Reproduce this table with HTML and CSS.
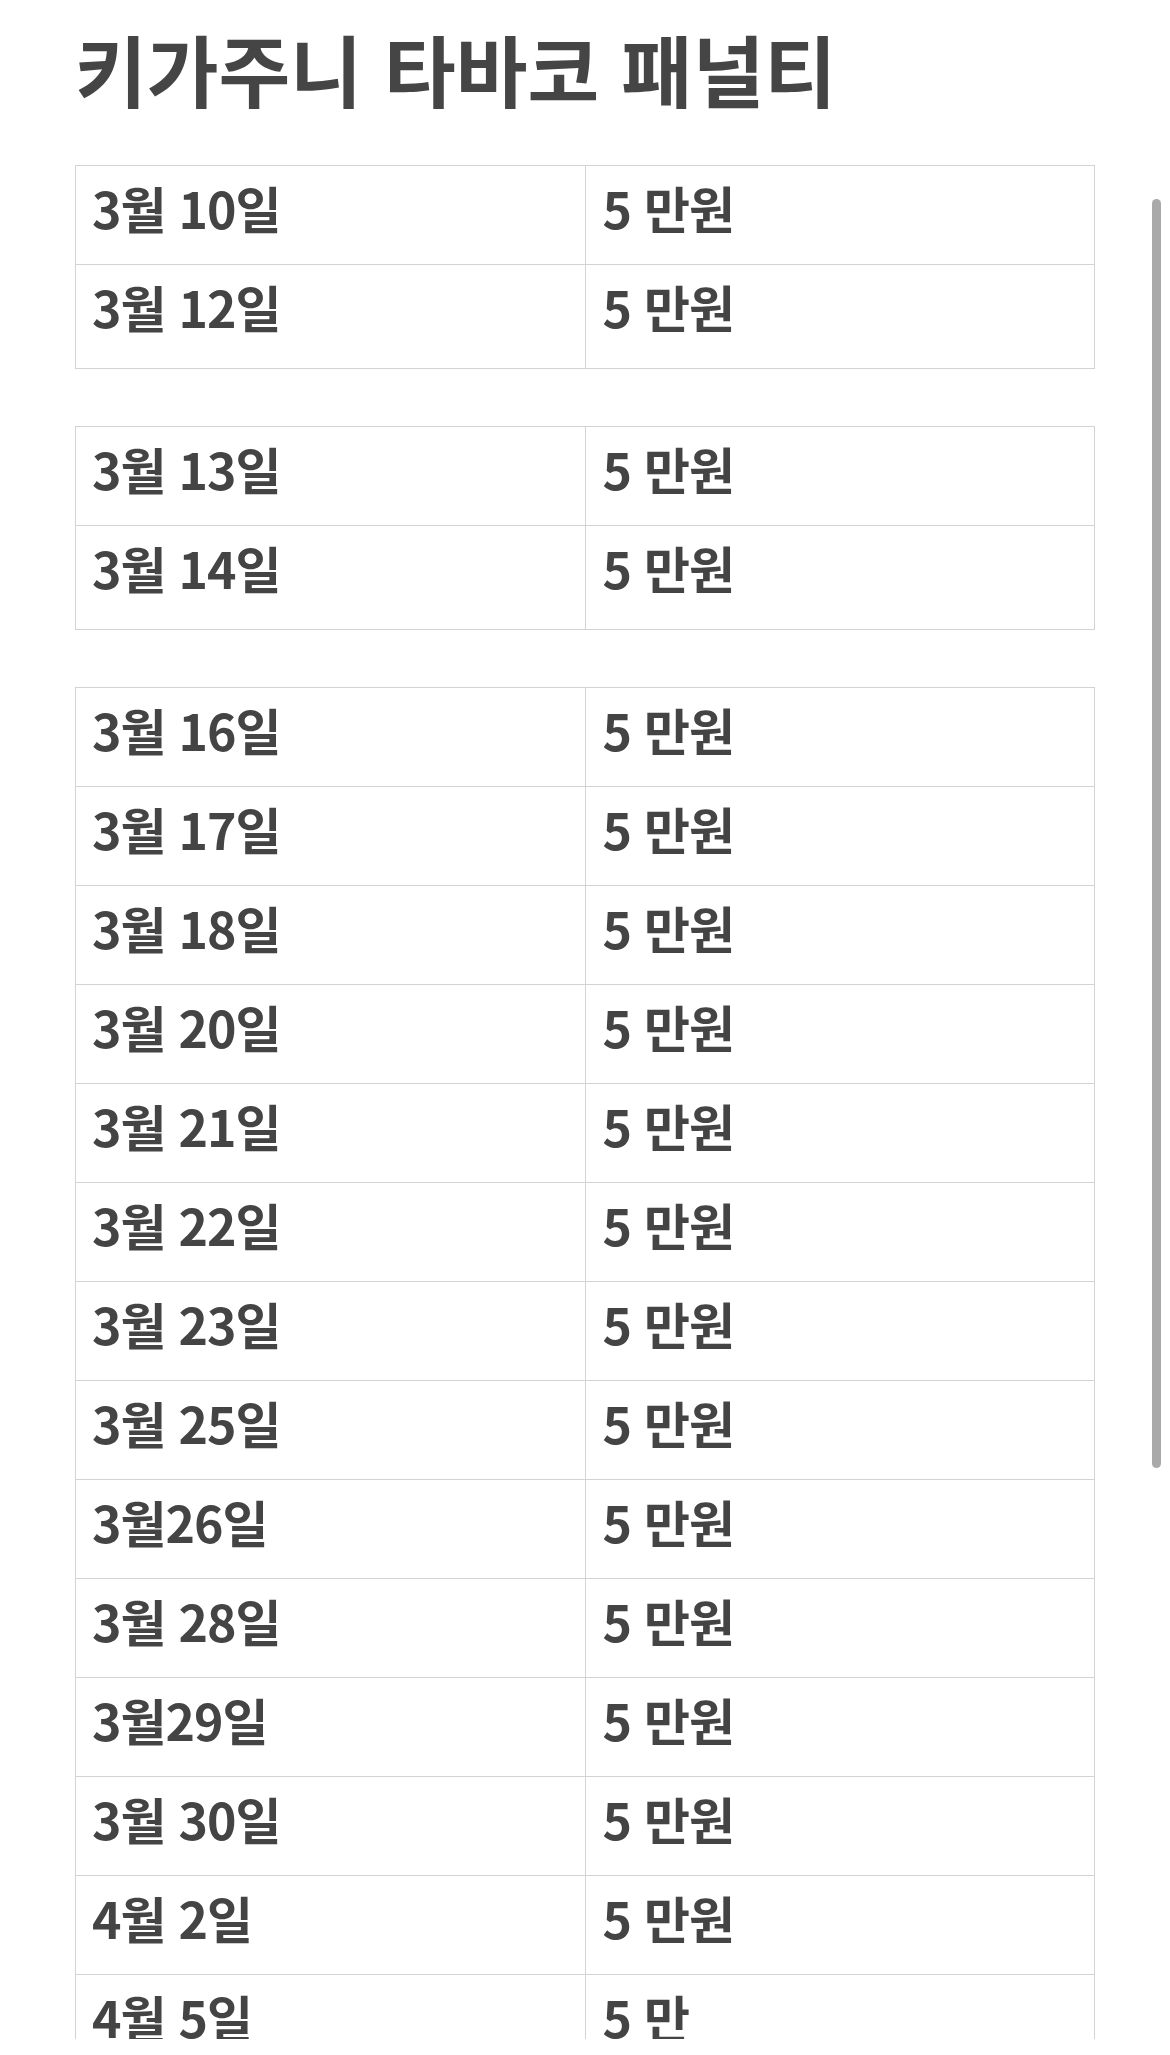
FILE: index.html
```html
<!DOCTYPE html>
<html lang="ko">
<head>
<meta charset="utf-8">
<title>키가주니 타바코 패널티</title>
<link rel="stylesheet" href="styles.css">
</head>
<body>
<div class="viewport">
  <div class="page">
    <h1 class="title">키가주니 타바코 패널티</h1>

    <table class="penalty">
      <tr><td>3월 10일</td><td>5 만원</td></tr>
      <tr><td>3월 12일</td><td>5 만원</td></tr>
    </table>

    <table class="penalty">
      <tr><td>3월 13일</td><td>5 만원</td></tr>
      <tr><td>3월 14일</td><td>5 만원</td></tr>
    </table>

    <table class="penalty">
      <tr><td>3월 16일</td><td>5 만원</td></tr>
      <tr><td>3월 17일</td><td>5 만원</td></tr>
      <tr><td>3월 18일</td><td>5 만원</td></tr>
      <tr><td>3월 20일</td><td>5 만원</td></tr>
      <tr><td>3월 21일</td><td>5 만원</td></tr>
      <tr><td>3월 22일</td><td>5 만원</td></tr>
      <tr><td>3월 23일</td><td>5 만원</td></tr>
      <tr><td>3월 25일</td><td>5 만원</td></tr>
      <tr><td>3월26일</td><td>5 만원</td></tr>
      <tr><td>3월 28일</td><td>5 만원</td></tr>
      <tr><td>3월29일</td><td>5 만원</td></tr>
      <tr><td>3월 30일</td><td>5 만원</td></tr>
      <tr><td>4월 2일</td><td>5 만원</td></tr>
      <tr><td>4월 5일</td><td>5 만</td></tr>
    </table>
  </div>
</div>
<div class="scrollbar"></div>
</body>
</html>
```

FILE: styles.css
```css
html, body {
  margin: 0;
  padding: 0;
  background: #ffffff;
}

body {
  font-family: "Noto Sans CJK KR", "Noto Sans", sans-serif;
  color: #444444;
}

.viewport {
  height: 2039px;
  overflow: hidden;
}

.page {
  padding-left: 75px;
  padding-top: 21px;
  width: 1020px;
}

.title {
  margin: 0 0 50px 0;
  font-size: 78px;
  line-height: 94px;
  font-weight: 700;
  letter-spacing: 0;
  color: #454545;
}

.penalty {
  width: 1020px;
  border-collapse: collapse;
  table-layout: fixed;
  margin-bottom: 57px;
}

.penalty td {
  border: 1px solid #d3d3d3;
  font-size: 50px;
  line-height: 75px;
  font-weight: 700;
  letter-spacing: -1px;
  padding: 4px 16px 19px 16px;
  vertical-align: top;
  color: #444444;
}

.penalty td + td {
  padding-left: 17px;
}

.penalty tr:last-child td {
  padding-bottom: 24px;
}

.scrollbar {
  position: fixed;
  left: 1152px;
  top: 199px;
  width: 9px;
  height: 1269px;
  border-radius: 5px;
  background: #a9a9a9;
}
```
